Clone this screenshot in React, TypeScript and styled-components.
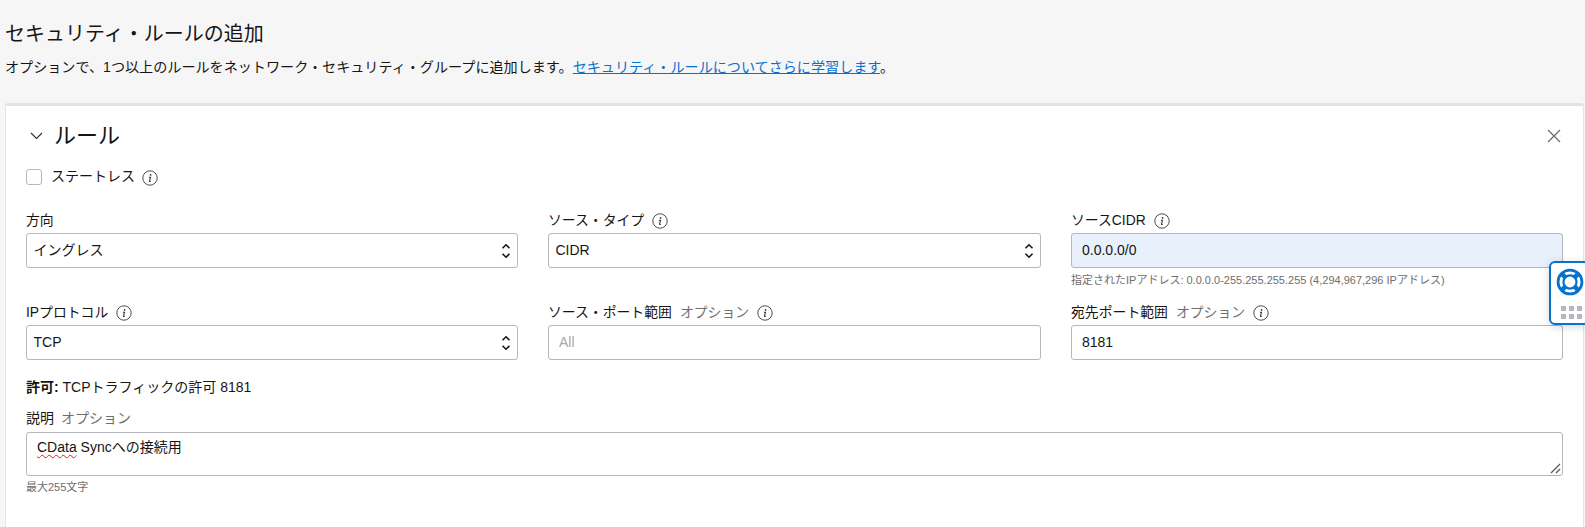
import { createGlobalStyle, styled } from "styled-components";

const Global = createGlobalStyle`
  html, body {
    margin: 0;
    height: 527px;
    overflow: hidden;
    background: #f6f6f6;
  }
  body {
    font-family: "Liberation Sans", "Noto Sans CJK JP", sans-serif;
    font-size: 14px;
    color: #161513;
  }
`;

const InfoIcon = () => (
  <S.Info viewBox="0 0 16 16">
    <circle cx="8" cy="8" r="7.2" fill="none" stroke="#4f4d4a" strokeWidth="1" />
    <circle cx="8.6" cy="4.9" r="0.9" fill="#3b3a38" />
    <path
      d="M6.9 7.3h1.6l-1 3.9c-.1.4.3.6 1.2-.1"
      fill="none"
      stroke="#3b3a38"
      strokeWidth="1.1"
    />
  </S.Info>
);

const SelectField = ({ value }: { value: string }) => (
  <S.SelectWrap>
    <S.Select defaultValue={value}>
      <option>{value}</option>
    </S.Select>
    <S.Updown viewBox="0 0 10 16">
      <path
        d="M1.5 5.2 5 1.8l3.5 3.4M1.5 10.8 5 14.2l3.5-3.4"
        fill="none"
        stroke="#161513"
        strokeWidth="1.6"
      />
    </S.Updown>
  </S.SelectWrap>
);

const App = () => {
  return (
    <S.Page>
      <Global />
      <S.Header>
        <S.Title>セキュリティ・ルールの追加</S.Title>
        <S.Subtitle>
          オプションで、1つ以上のルールをネットワーク・セキュリティ・グループに追加します。
          <S.Link href="#">セキュリティ・ルールについてさらに学習します</S.Link>。
        </S.Subtitle>
      </S.Header>

      <S.Card>
        <S.HeadingRow>
          <svg width="13" height="8" viewBox="0 0 13 8">
            <path d="M1 1l5.5 5.5L12 1" fill="none" stroke="#302e2c" strokeWidth="1.1" />
          </svg>
          <S.Heading>ルール</S.Heading>
          <S.Close viewBox="0 0 14 14">
            <path d="M1 1l12 12M13 1 1 13" fill="none" stroke="#6b6966" strokeWidth="1.2" />
          </S.Close>
        </S.HeadingRow>

        <S.CheckRow>
          <S.Check type="checkbox" />
          <S.CheckText>ステートレス</S.CheckText>
          <InfoIcon />
        </S.CheckRow>

        <S.Grid>
          <S.Field>
            <S.Label>
              <S.LabelText>方向</S.LabelText>
            </S.Label>
            <SelectField value="イングレス" />
          </S.Field>
          <S.Field>
            <S.Label>
              <S.LabelText>ソース・タイプ</S.LabelText>
              <InfoIcon />
            </S.Label>
            <SelectField value="CIDR" />
          </S.Field>
          <S.Field>
            <S.Label>
              <S.LabelText>ソースCIDR</S.LabelText>
              <InfoIcon />
            </S.Label>
            <S.Input $filled defaultValue="0.0.0.0/0" />
            <S.Help>
              指定されたIPアドレス: 0.0.0.0-255.255.255.255 (4,294,967,296 IPアドレス)
            </S.Help>
          </S.Field>
          <S.Field>
            <S.Label>
              <S.LabelText>IPプロトコル</S.LabelText>
              <InfoIcon />
            </S.Label>
            <SelectField value="TCP" />
          </S.Field>
          <S.Field>
            <S.Label>
              <S.LabelText>ソース・ポート範囲</S.LabelText>
              <S.Optional>オプション</S.Optional>
              <InfoIcon />
            </S.Label>
            <S.Input placeholder="All" />
          </S.Field>
          <S.Field>
            <S.Label>
              <S.LabelText>宛先ポート範囲</S.LabelText>
              <S.Optional>オプション</S.Optional>
              <InfoIcon />
            </S.Label>
            <S.Input defaultValue="8181" />
          </S.Field>
        </S.Grid>

        <S.Allow>
          <b>許可:</b> TCPトラフィックの許可 8181
        </S.Allow>

        <S.DescLabel>
          説明 <S.DescOptional>オプション</S.DescOptional>
        </S.DescLabel>
        <S.TextBox>
          <S.Misspelled>CData</S.Misspelled> Syncへの接続用
          <S.Resizer viewBox="0 0 11 11">
            <path d="M1 10 10 1M6 10l4-4" fill="none" stroke="#5f5d5a" strokeWidth="1.4" />
          </S.Resizer>
        </S.TextBox>
        <S.Counter>最大255文字</S.Counter>
      </S.Card>

      <S.Widget>
        <svg width="28" height="28" viewBox="0 0 30 30">
          <circle cx="15" cy="15" r="12.8" fill="none" stroke="#0572ce" strokeWidth="3" />
          <circle cx="15" cy="15" r="7" fill="none" stroke="#0572ce" strokeWidth="2.4" />
          <path
            d="M6 6l4 4M24 6l-4 4M6 24l4-4M24 24l-4-4"
            stroke="#0572ce"
            strokeWidth="5"
          />
        </svg>
        <S.Dots>
          {Array.from({ length: 6 }).map((_, i) => (
            <S.Dot key={i} />
          ))}
        </S.Dots>
      </S.Widget>
    </S.Page>
  );
};

export default App;

const S = {
  Page: styled.div`
    position: relative;
    height: 527px;
    overflow: hidden;
    padding: 0 1px 0 5px;
    box-sizing: border-box;
  `,

  Header: styled.div`
    height: 103px;
    padding-top: 22px;
    box-sizing: border-box;
  `,

  Title: styled.h1`
    margin: 0;
    font-size: 20px;
    font-weight: 400;
    line-height: 24px;
  `,

  Subtitle: styled.p`
    margin: 11px 0 0;
    font-size: 14.1px;
    line-height: 20px;
  `,

  Link: styled.a`
    color: #0572ce;
    text-decoration: underline;
  `,

  Card: styled.section`
    background: #fff;
    border: 1px solid #e4e4e6;
    border-top-width: 3px;
    border-bottom: 0;
    border-radius: 3px 3px 0 0;
    padding: 12px 20px 0 20px;
    height: 424px;
    box-sizing: border-box;
  `,

  HeadingRow: styled.div`
    display: flex;
    align-items: center;
    height: 36px;
    padding-left: 4px;
  `,

  Heading: styled.h2`
    margin: 0 0 0 11px;
    font-size: 22px;
    font-weight: 400;
    line-height: 36px;
  `,

  Close: styled.svg`
    width: 14px;
    height: 14px;
    margin-left: auto;
    margin-right: 2px;
  `,

  CheckRow: styled.div`
    display: flex;
    align-items: center;
    gap: 7px;
    height: 20px;
    margin-top: 13px;
  `,

  Check: styled.input`
    appearance: none;
    width: 16px;
    height: 16px;
    margin: 0 2px 0 0;
    background: #fff;
    border: 1px solid #b4b7bd;
    border-radius: 3px;
  `,

  CheckText: styled.span`
    padding-bottom: 5px;
  `,

  Info: styled.svg`
    width: 16px;
    height: 16px;
    flex: none;
    position: relative;
    top: 1px;
  `,

  Grid: styled.div`
    display: grid;
    grid-template-columns: 492px 493px 1fr;
    column-gap: 30px;
    row-gap: 15px;
    margin-top: 23px;
  `,

  Field: styled.div`
    display: flex;
    flex-direction: column;
  `,

  Label: styled.label`
    display: flex;
    align-items: center;
    gap: 8px;
    height: 20px;
    margin-bottom: 3px;
    font-size: 13.85px;
    white-space: nowrap;
  `,

  LabelText: styled.span`
    padding-bottom: 2px;
  `,

  Optional: styled.span`
    color: #6f6e6c;
    padding-bottom: 2px;
  `,

  DescOptional: styled.span`
    color: #6f6e6c;
    margin-left: 3px;
  `,

  SelectWrap: styled.div`
    position: relative;
  `,

  Select: styled.select`
    appearance: none;
    display: block;
    width: 100%;
    height: 35px;
    padding: 0 24px 2px 6.5px;
    box-sizing: border-box;
    background: #fff;
    border: 1px solid #b4b7bd;
    border-radius: 3px;
    font: inherit;
    color: #161513;
  `,

  Updown: styled.svg`
    position: absolute;
    right: 7px;
    top: 9.5px;
    width: 10px;
    height: 16px;
    pointer-events: none;
  `,

  Input: styled.input<{ $filled?: boolean }>`
    display: block;
    width: 100%;
    height: 35px;
    padding: 0 10px 2px;
    box-sizing: border-box;
    background: ${(p) => (p.$filled ? "#e8f0fb" : "#fff")};
    border: 1px solid #b4b7bd;
    border-radius: 3px;
    font: inherit;
    color: #161513;
    &::placeholder {
      color: #a9a8a6;
    }
  `,

  Help: styled.div`
    margin-top: 5px;
    height: 14px;
    font-size: 11px;
    line-height: 14px;
    color: #6f6e6c;
  `,

  Allow: styled.div`
    margin-top: 17px;
    height: 20px;
    line-height: 20px;
    font-size: 14px;
  `,

  DescLabel: styled.div`
    margin-top: 11px;
    height: 20px;
    line-height: 20px;
    font-size: 14px;
  `,

  TextBox: styled.div`
    position: relative;
    margin-top: 4px;
    height: 44px;
    padding: 4px 10px;
    box-sizing: border-box;
    background: #fff;
    border: 1px solid #b4b7bd;
    border-radius: 3px;
    font-size: 14px;
    line-height: 20px;
  `,

  Misspelled: styled.span`
    text-decoration: underline wavy #e02020 1px;
    text-underline-offset: 2px;
  `,

  Resizer: styled.svg`
    position: absolute;
    right: 1px;
    bottom: 1px;
    width: 11px;
    height: 11px;
  `,

  Counter: styled.div`
    margin-top: 4px;
    height: 14px;
    font-size: 11px;
    line-height: 14px;
    color: #6f6e6c;
  `,

  Widget: styled.div`
    position: absolute;
    top: 261px;
    left: 1549px;
    width: 40px;
    height: 64px;
    box-sizing: border-box;
    padding: 5px 0 0 5px;
    background: #fff;
    border: 2px solid #0572ce;
    border-radius: 6px;
    box-shadow: 0 2px 8px rgba(0, 0, 0, 0.16);
  `,

  Dots: styled.div`
    display: grid;
    grid-template-columns: repeat(3, 5px);
    gap: 3.5px 3px;
    margin: 7px 0 0 5px;
  `,

  Dot: styled.i`
    display: block;
    width: 5px;
    height: 4.5px;
    background: #b4b7bd;
  `,
};
